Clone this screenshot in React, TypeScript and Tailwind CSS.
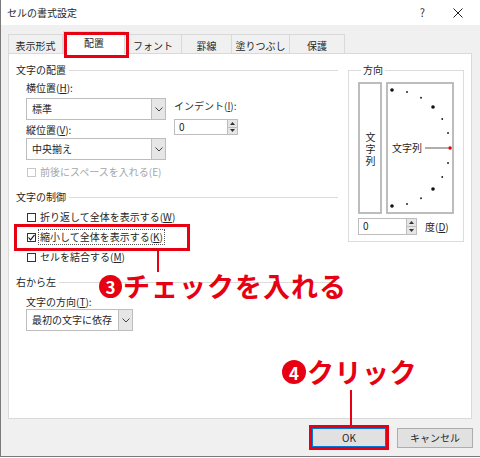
import React from 'react';

const RED = '#e60012';

function Chevron() {
  return (
    <svg width="8" height="5" viewBox="0 0 8 5" fill="none">
      <polyline points="0.5,0.5 4,4 7.5,0.5" stroke="#444" strokeWidth="1" />
    </svg>
  );
}

function Select({ value, className = '' }: { value: string; className?: string }) {
  return (
    <div className={`flex h-[22px] border border-[#bdbdbd] bg-white ${className}`}>
      <span className="flex-1 pl-[5px] leading-[20px]">{value}</span>
      <span className="w-[14px] border-l border-[#bdbdbd] bg-[#e6e6e6] flex items-center justify-center">
        <Chevron />
      </span>
    </div>
  );
}

function Spin({ value, className = '' }: { value: string; className?: string }) {
  return (
    <div className={`flex h-[16px] border border-[#bdbdbd] bg-white ${className}`}>
      <span className="flex-1 pl-[4px] leading-[14px]">{value}</span>
      <span className="w-[10px] flex flex-col border-l border-[#bdbdbd]">
        <span className="flex-1 bg-[#e6e6e6] border-b border-[#bdbdbd] flex items-center justify-center">
          <svg width="5" height="3" viewBox="0 0 5 3">
            <polygon points="0,3 2.5,0 5,3" fill="#333" />
          </svg>
        </span>
        <span className="flex-1 bg-[#e6e6e6] flex items-center justify-center">
          <svg width="5" height="3" viewBox="0 0 5 3">
            <polygon points="0,0 2.5,3 5,0" fill="#333" />
          </svg>
        </span>
      </span>
    </div>
  );
}

function Header({ children, className = '' }: { children: React.ReactNode; className?: string }) {
  return (
    <div className={`flex items-center gap-[3px] h-[16px] ${className}`}>
      <span className="leading-[16px]">{children}</span>
      <span className="flex-1 h-px bg-[#dcdcdc] mr-[2px]" />
    </div>
  );
}

function Check({
  children,
  checked,
  disabled,
  focus,
}: {
  children: React.ReactNode;
  checked?: boolean;
  disabled?: boolean;
  focus?: boolean;
}) {
  return (
    <div className="flex items-center h-[20px] gap-[3px]">
      <span
        className={`w-[9px] h-[9px] border bg-white flex items-center justify-center ${
          disabled ? 'border-[#c8c8c8]' : 'border-[#333]'
        }`}
      >
        {checked ? (
          <svg width="7" height="7" viewBox="0 0 7 7" fill="none">
            <polyline points="0.5,3.5 2.6,5.8 6.5,0.8" stroke="#111" strokeWidth="1.1" />
          </svg>
        ) : null}
      </span>
      <span
        className={`leading-[14px] px-[1px] ${disabled ? 'text-[#a6a6a6]' : ''} ${
          focus ? 'outline outline-1 outline-dotted outline-[#555]' : ''
        }`}
      >
        {children}
      </span>
    </div>
  );
}

const u = (c: string) => <span className="underline underline-offset-1">{c}</span>;

function Dial() {
  const dots = [];
  for (let i = 0; i <= 12; i++) {
    const a = ((-90 + i * 15) * Math.PI) / 180;
    const x = 4 + 58 * Math.cos(a);
    const y = 64 + 58 * Math.sin(a);
    const big = i % 3 === 0;
    dots.push(
      <circle key={i} cx={x} cy={y} r={big ? 1.8 : 0.9} fill={i === 6 ? '#e00000' : '#111'} />
    );
  }
  return (
    <div className="relative w-[68px] h-[132px] border-2 border-[#bdbdbd]">
      <svg className="absolute inset-0" width="64" height="128" viewBox="0 0 64 128">
        {dots}
        <line x1="37" y1="64" x2="60" y2="64" stroke="#333" strokeWidth="0.8" />
      </svg>
      <span className="absolute left-[4px] top-[56px] leading-[16px]">文字列</span>
    </div>
  );
}

export default function App() {
  const tabs = [
    { label: '表示形式', w: 'w-[55px]' },
    { label: '配置', w: 'w-[62px]', active: true },
    { label: 'フォント', w: 'w-[57px]' },
    { label: '罫線', w: 'w-[50px]' },
    { label: '塗りつぶし', w: 'w-[58px]' },
    { label: '保護', w: 'w-[55px]' },
  ];

  return (
    <div className="relative w-[480px] h-[457px] bg-[#f0f0f0] border-l border-b border-[#7a7a7a] overflow-hidden text-[10px] text-[#262626] font-['Noto_Sans_CJK_JP','Noto_Sans',sans-serif]">
      {/* title bar */}
      <div className="h-[25px] bg-white flex items-center pl-[6px]">
        <span className="flex-1 leading-[16px]">セルの書式設定</span>
        <span className="text-[11px] text-[#333] mr-[28px]">?</span>
        <svg width="10" height="10" viewBox="0 0 10 10" className="mr-[17px]">
          <line x1="0.5" y1="0.5" x2="9.5" y2="9.5" stroke="#222" strokeWidth="1" />
          <line x1="9.5" y1="0.5" x2="0.5" y2="9.5" stroke="#222" strokeWidth="1" />
        </svg>
      </div>

      {/* tabs */}
      <div className="h-[28px] flex items-end pl-[7px]">
        {tabs.map((t) =>
          t.active ? (
            <div
              key={t.label}
              className={`relative z-10 ${t.w} h-[23px] -mb-px bg-white border border-b-0 border-[#d9d9d9] flex items-center justify-center pb-[1px]`}
            >
              {t.label}
              <span className="absolute left-0 top-0 w-[65px] h-[26px] border-[3px] border-[#e60012]" />
            </div>
          ) : (
            <div
              key={t.label}
              className={`${t.w} h-[19px] border border-b-0 border-l-0 first:border-l border-[#d9d9d9] flex items-center justify-center pt-[2px]`}
            >
              {t.label}
            </div>
          )
        )}
      </div>

      {/* panel */}
      <div className="ml-[7px] w-[464px] h-[366px] bg-white border border-[#d9d9d9] flex pl-[7px] pt-[8px]">
        <div className="w-[324px]">
          <Header>文字の配置</Header>
          <div className="ml-[10px] flex">
            <div className="w-[140px]">
              <div className="mt-[2px] leading-[16px]">横位置({u('H')}):</div>
              <Select value="標準" className="mt-[2px]" />
              <div className="mt-[2px] leading-[16px]">縦位置({u('V')}):</div>
              <Select value="中央揃え" />
            </div>
            <div className="ml-[8px] pt-[20px]">
              <div className="leading-[16px] text-[#333]">インデント({u('I')}):</div>
              <Spin value="0" className="mt-[5px] w-[64px]" />
            </div>
          </div>
          <div className="ml-[11px] mt-[2px]">
            <Check disabled>前後にスペースを入れる(E)</Check>
          </div>

          <Header className="mt-[7px]">文字の制御</Header>
          <div className="ml-[11px] mt-[2px]">
            <Check>折り返して全体を表示する({u('W')})</Check>
            <Check checked focus>
              縮小して全体を表示する({u('K')})
            </Check>
            <Check>セルを結合する({u('M')})</Check>
          </div>

          <Header className="mt-[7px]">右から左</Header>
          <div className="ml-[10px]">
            <div className="mt-[4px] leading-[15px]">文字の方向({u('T')}):</div>
            <Select value="最初の文字に依存" className="w-[107px] h-[21px]" />
          </div>
        </div>

        <div className="ml-[8px]">
          <fieldset className="w-[115px] border border-[#dcdcdc] px-[9px] pt-[4px] pb-[6px]">
            <legend className="ml-[3px] px-[2px] leading-[16px]">方向</legend>
            <div className="flex gap-[4px]">
              <div className="w-[24px] h-[132px] border-2 border-[#bdbdbd] flex items-center justify-center pt-[4px]">
                <span className="[writing-mode:vertical-rl] tracking-[2px] leading-[12px]">文字列</span>
              </div>
              <Dial />
            </div>
            <div className="mt-[4px] flex items-center">
              <Spin value="0" className="w-[59px] h-[17px]" />
              <span className="ml-[8px] leading-[16px]">度({u('D')})</span>
            </div>
          </fieldset>
        </div>
      </div>

      {/* buttons */}
      <div className="mt-[6px] flex justify-end items-center gap-[8px] pr-[7px]">
        <div className="border-[3px] border-[#e60012]">
          <button className="w-[74px] h-[19px] bg-[#e1e1e1] border border-[#0078d7] flex items-center justify-center">
            OK
          </button>
        </div>
        <button className="w-[76px] h-[20px] bg-[#e1e1e1] border border-[#adadad] flex items-center justify-center">
          キャンセル
        </button>
      </div>

      {/* annotation 3 */}
      <span className="absolute left-[13px] top-[224px] w-[176px] h-[27px] border-[3px] border-[#e60012]" />
      <span className="absolute left-[156px] top-[250px] w-[2px] h-[22px]" style={{ background: RED }} />
      <div className="absolute left-[98px] top-[270px] flex items-center text-[#e60012] font-bold">
        <span className="w-[23px] h-[23px] rounded-full bg-[#e60012] text-white flex items-center justify-center text-[17px] leading-none">
          3
        </span>
        <span className="ml-[1px] text-[27px] leading-[32px] tracking-[1px]">チェックを入れる</span>
      </div>

      {/* annotation 4 */}
      <div className="absolute left-[281px] top-[356px] flex items-center text-[#e60012] font-bold">
        <span className="w-[24px] h-[24px] rounded-full bg-[#e60012] text-white flex items-center justify-center text-[17px] leading-none">
          4
        </span>
        <span className="ml-[1px] text-[27px] leading-[32px] tracking-[0.5px]">クリック</span>
      </div>
      <span className="absolute left-[349px] top-[390px] w-[2px] h-[35px]" style={{ background: RED }} />
    </div>
  );
}
